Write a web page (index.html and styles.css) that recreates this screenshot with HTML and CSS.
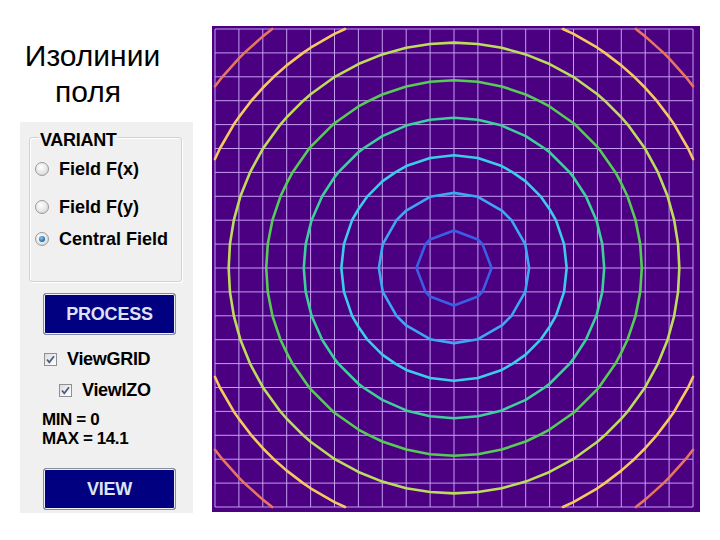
FILE: index.html
```html
<!DOCTYPE html>
<html>
<head>
<meta charset="utf-8">
<title>Изолинии поля</title>
<link rel="stylesheet" href="styles.css">
</head>
<body>
<div class="page">
  <div class="left">
    <div class="title">
      <div class="t1">Изолинии</div>
      <div class="t2">поля</div>
    </div>
    <div class="panel">
      <div class="group">
        <span class="legend">VARIANT</span>
        <div class="opt o1"><span class="radio"></span>Field F(x)</div>
        <div class="opt o2"><span class="radio"></span>Field F(y)</div>
        <div class="opt o3"><span class="radio on"></span>Central Field</div>
      </div>
      <div class="btn b1">PROCESS</div>
      <div class="chk c1"><span class="box"><svg width="11" height="11" viewBox="0 0 11 11"><path d="M2 5.5 L4.3 8.3 L9 2.2" fill="none" stroke="#4a5d84" stroke-width="1.8"/></svg></span>ViewGRID</div>
      <div class="chk c2"><span class="box"><svg width="11" height="11" viewBox="0 0 11 11"><path d="M2 5.5 L4.3 8.3 L9 2.2" fill="none" stroke="#4a5d84" stroke-width="1.8"/></svg></span>ViewIZO</div>
      <div class="stats">
        <div class="st">MIN = 0</div>
        <div class="st">MAX = 14.1</div>
      </div>
      <div class="btn b2">VIEW</div>
    </div>
  </div>
  <svg id="plot" class="plot" width="488" height="486" viewBox="0 0 488 486"></svg>
</div>
<script src="script.js"></script>
</body>
</html>
```

FILE: styles.css
```css
html, body {
  margin: 0;
  padding: 0;
  background: #ffffff;
}
body {
  font-family: "Liberation Sans", Arial, sans-serif;
  color: #000;
}
.page {
  display: flex;
  align-items: flex-start;
  gap: 19px;
  padding: 26px 0 0 20px;
}
.left {
  width: 173px;
  display: flex;
  flex-direction: column;
}
.title {
  width: 145px;
  padding-top: 12px;
  font-size: 30px;
  line-height: 36px;
  text-align: center;
}
.title .t2 {
  padding-right: 9px;
}
.panel {
  margin-top: 12px;
  height: 391px;
  background: #f0f0f0;
  display: flex;
  flex-direction: column;
  align-items: flex-start;
  font-weight: bold;
  font-size: 18px;
}
.group {
  box-sizing: border-box;
  margin: 15px 0 0 9px;
  width: 153px;
  height: 145px;
  border: 1px solid #d2d2d2;
  border-radius: 3px;
  box-shadow: inset 1px 1px 0 #ffffff, 1px 1px 0 #ffffff;
}
.legend {
  display: block;
  width: max-content;
  margin: -8px 0 0 9px;
  padding: 0 1px;
  line-height: 20px;
  background: #f0f0f0;
  letter-spacing: -0.3px;
}
.opt {
  display: flex;
  align-items: center;
  gap: 10px;
  height: 20px;
  margin-left: 5px;
  white-space: nowrap;
}
.o1 { margin-top: 9px; }
.o2 { margin-top: 18px; }
.o3 { margin-top: 12px; }
.radio {
  box-sizing: border-box;
  width: 14px;
  height: 14px;
  border-radius: 50%;
  border: 1px solid #9a9a9a;
  background: radial-gradient(circle at 40% 35%, #ffffff 0%, #e6e6e6 55%, #c8c8c8 100%);
  display: flex;
  align-items: center;
  justify-content: center;
}
.radio.on::after {
  content: "";
  width: 6px;
  height: 6px;
  border-radius: 50%;
  background: radial-gradient(circle at 40% 35%, #8cc6f0 0%, #2a72b8 60%, #17497f 100%);
}
.btn {
  box-sizing: border-box;
  width: 133px;
  height: 42px;
  margin-left: 23px;
  background: #000080;
  border: 1px solid #858c9a;
  border-radius: 3px;
  box-shadow: inset 0 0 0 1px #eef1f8;
  color: #dfe2f4;
  display: flex;
  align-items: center;
  justify-content: center;
  letter-spacing: -0.2px;
}
.b1 { margin-top: 11px; }
.b2 { margin-top: 20px; }
.chk {
  display: flex;
  align-items: center;
  gap: 10px;
  height: 20px;
  white-space: nowrap;
  letter-spacing: -0.3px;
}
.c1 { margin: 14px 0 0 24px; }
.c2 { margin: 11px 0 0 39px; }
.box {
  box-sizing: border-box;
  width: 13px;
  height: 13px;
  border: 1px solid #8f9090;
  background: linear-gradient(135deg, #dcdcdc 0%, #f2f2f2 60%, #ffffff 100%);
  display: flex;
  align-items: center;
  justify-content: center;
}
.box svg {
  display: block;
}
.stats {
  margin: 10px 0 0 22px;
  font-size: 17px;
  letter-spacing: -0.4px;
}
.st {
  height: 19px;
  line-height: 19px;
}
.plot {
  display: block;
  flex: none;
  background: #4b0082;
}
```

FILE: script.js
```js
(function () {
  var NS = 'http://www.w3.org/2000/svg';
  var svg = document.getElementById('plot');
  var U = 23.9, O = 3, N = 20;
  function X(i) { return O + i * U; }

  var g = '';
  for (var i = 0; i <= N; i++) {
    var p = X(i).toFixed(2);
    g += 'M' + p + ' ' + O + 'V' + (O + N * U).toFixed(2);
    g += 'M' + O + ' ' + p + 'H' + (O + N * U).toFixed(2);
  }
  var grid = document.createElementNS(NS, 'path');
  grid.setAttribute('d', g);
  grid.setAttribute('stroke', '#c49ef0');
  grid.setAttribute('stroke-width', '1');
  grid.setAttribute('fill', 'none');
  svg.appendChild(grid);

  function f(i, j) {
    var dx = i - 10, dy = j - 10;
    return Math.sqrt(dx * dx + dy * dy);
  }
  var max = f(0, 0);
  var colors = ['#3a5ee6', '#3ea6f2', '#3ccbe8', '#3ecf9c', '#56cc56', '#bedc5c', '#f8c860', '#e8765e'];

  for (var k = 1; k <= 8; k++) {
    var L = k * max / 9;
    var d = '';
    for (var a = 0; a < N; a++) {
      for (var b = 0; b < N; b++) {
        var c = [[a, b], [a + 1, b], [a + 1, b + 1], [a, b + 1]];
        var pts = [];
        for (var e = 0; e < 4; e++) {
          var p0 = c[e], p1 = c[(e + 1) % 4];
          var v0 = f(p0[0], p0[1]), v1 = f(p1[0], p1[1]);
          if ((v0 < L) !== (v1 < L)) {
            var t = (L - v0) / (v1 - v0);
            var x = p0[0] + t * (p1[0] - p0[0]);
            var y = p0[1] + t * (p1[1] - p0[1]);
            pts.push([X(x), X(y)]);
          }
        }
        for (var q = 0; q + 1 < pts.length; q += 2) {
          d += 'M' + pts[q][0].toFixed(2) + ' ' + pts[q][1].toFixed(2) +
               'L' + pts[q + 1][0].toFixed(2) + ' ' + pts[q + 1][1].toFixed(2);
        }
      }
    }
    var path = document.createElementNS(NS, 'path');
    path.setAttribute('d', d);
    path.setAttribute('stroke', colors[k - 1]);
    path.setAttribute('stroke-width', '2.6');
    path.setAttribute('stroke-linecap', 'round');
    path.setAttribute('stroke-linejoin', 'round');
    path.setAttribute('fill', 'none');
    svg.appendChild(path);
  }
})();
```
